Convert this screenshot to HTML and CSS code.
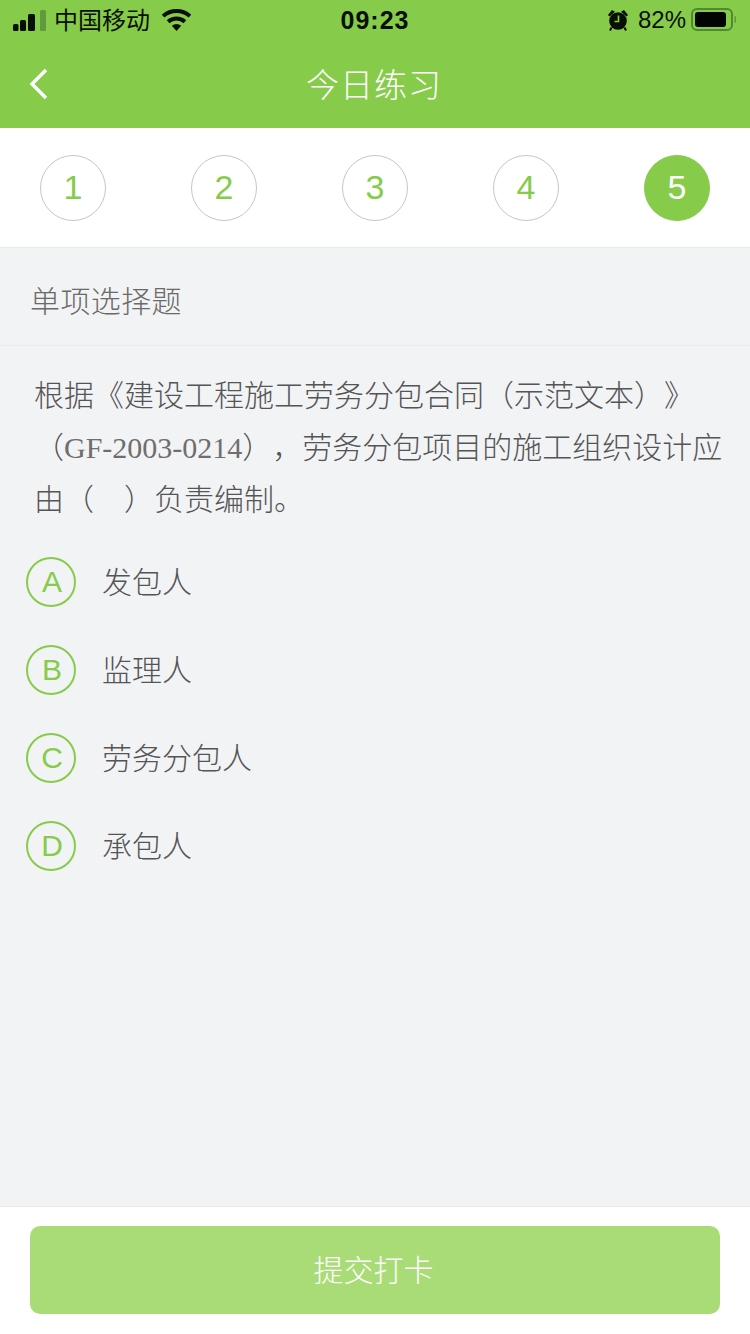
FILE: index.html
```html
<!DOCTYPE html>
<html lang="zh-CN">
<head>
  <meta charset="UTF-8" />
  <title>今日练习</title>
  <link rel="stylesheet" href="styles.css">
</head>
<body>
  <div class="page">
    <!-- Status bar + nav -->
    <div class="top">
      <div class="status">
        <div class="status-left">
          <svg class="signal" width="34" height="21" viewBox="0 0 34 21">
            <rect x="0" y="14" width="5.5" height="7" rx="1.5" fill="#0a0f05"/>
            <rect x="7" y="10" width="6" height="11" rx="1.5" fill="#0a0f05"/>
            <rect x="15" y="4" width="7" height="17" rx="1.5" fill="#0a0f05"/>
            <rect x="27" y="0" width="6" height="21" rx="1.5" fill="#5f9a3f"/>
          </svg>
          <span class="carrier">中国移动</span>
          <svg class="wifi" width="29" height="24" viewBox="0 0 29 24">
            <path d="M1.1 8.1A20 20 0 0 1 27.9 8.1" fill="none" stroke="#0a0f05" stroke-width="4"/>
            <path d="M6.1 13.7A12.5 12.5 0 0 1 22.9 13.7" fill="none" stroke="#0a0f05" stroke-width="4"/>
            <path d="M14.5 23L9.8 17.8A7 7 0 0 1 19.2 17.8Z" fill="#0a0f05"/>
          </svg>
        </div>
        <span class="time">09:23</span>
        <div class="status-right">
          <svg class="alarm" width="22" height="22" viewBox="0 0 22 22">
            <circle cx="11" cy="12" r="8.8" fill="#0a0f05"/>
            <path d="M1 6L5 1 8 2.8 2.5 7.5ZM21 6L17 1 14 2.8 19.5 7.5Z" fill="#0a0f05"/>
            <path d="M4.5 18.5L3 21.5M17.5 18.5L19 21.5" stroke="#0a0f05" stroke-width="2"/>
            <path d="M11.5 6.5V12.5H7.5" fill="none" stroke="#86cc4a" stroke-width="1.6"/>
          </svg>
          <span class="percent">82%</span>
          <svg class="battery" width="46" height="24" viewBox="0 0 46 24">
            <rect x="1" y="1" width="40" height="21" rx="5" fill="none" stroke="#4f8a32" stroke-width="2"/>
            <rect x="4" y="4" width="31" height="15" rx="3" fill="#020402"/>
            <rect x="43.5" y="8" width="1.5" height="7" rx="0.7" fill="#5f9a3f"/>
          </svg>
        </div>
      </div>
      <div class="nav">
        <svg class="back" width="20" height="32" viewBox="0 0 20 32">
          <path d="M17 2L3 16L17 30" fill="none" stroke="#fff" stroke-width="3.4"/>
        </svg>
        <h1>今日练习</h1>
      </div>
    </div>

    <!-- Question numbers -->
    <div class="steps">
      <div class="step">1</div>
      <div class="step">2</div>
      <div class="step">3</div>
      <div class="step">4</div>
      <div class="step current">5</div>
    </div>

    <div class="type">单项选择题</div>

    <div class="question">
      根据《建设工程施工劳务分包合同（示范文本）》<br>
      （<span class="latin">GF-2003-0214</span>），劳务分包项目的施工组织设计应<br>
      由（　）负责编制。
    </div>

    <div class="options">
      <div class="option"><span class="letter">A</span><span class="label">发包人</span></div>
      <div class="option"><span class="letter">B</span><span class="label">监理人</span></div>
      <div class="option"><span class="letter">C</span><span class="label">劳务分包人</span></div>
      <div class="option"><span class="letter">D</span><span class="label">承包人</span></div>
    </div>

    <div class="footer">
      <button class="submit">提交打卡</button>
    </div>
  </div>
</body>
</html>
```

FILE: styles.css
```css
* {
  box-sizing: border-box;
}

html, body {
  margin: 0;
  height: 100%;
}

body {
  font-family: "Noto Sans CJK SC", "Liberation Sans", sans-serif;
  background: #f2f3f5;
  color: #666;
  text-spacing-trim: space-all;
}

.page {
  display: flex;
  flex-direction: column;
  height: 1334px;
  overflow: hidden;
}

.top {
  background: #86cc4a;
  height: 128px;
}

.status {
  display: grid;
  grid-template-columns: 1fr auto 1fr;
  align-items: center;
  height: 40px;
  padding: 0 13px 0 13px;
  color: #0a0f05;
  font-family: "Liberation Sans", "Noto Sans CJK SC", sans-serif;
}

.status-left, .status-right {
  display: flex;
  align-items: center;
}

.status-right {
  justify-content: flex-end;
}

.carrier {
  font-family: "Noto Sans CJK SC", sans-serif;
  font-size: 24px;
  line-height: 1;
  margin-left: 7px;
  padding-bottom: 2px;
}

.wifi {
  margin-left: 12px;
}

.time {
  font-size: 25px;
  font-weight: bold;
  letter-spacing: 1px;
}

.alarm {
  margin-right: 9px;
}

.percent {
  font-size: 24px;
  margin-right: 5px;
}

.nav {
  position: relative;
  height: 88px;
  padding-right: 2px;
  display: flex;
  align-items: center;
  justify-content: center;
}

.nav h1 {
  margin: 0 0 2px;
  font-size: 33px;
  font-weight: 300;
  color: #fff;
  letter-spacing: 1px;
}

.back {
  position: absolute;
  left: 29px;
  top: 28px;
}

.steps {
  display: flex;
  justify-content: space-between;
  align-items: center;
  height: 120px;
  padding: 0 40px 0;
  background: #fff;
  border-bottom: 1px solid #e8e9eb;
}

.step {
  width: 66px;
  height: 66px;
  border: 1px solid #c6c6c6;
  border-radius: 50%;
  display: flex;
  align-items: center;
  justify-content: center;
  font-family: "Liberation Sans", sans-serif;
  font-size: 34px;
  color: #86cc4a;
}

.step.current {
  background: #86cc4a;
  border-color: #86cc4a;
  color: #fff;
}

.type {
  height: 98px;
  padding: 4px 30px 0;
  display: flex;
  align-items: center;
  font-size: 30px;
  font-weight: 300;
  line-height: 1;
  letter-spacing: 0.4px;
  color: #6a6a6a;
  border-bottom: 1px solid #e9eaec;
}

.question {
  padding: 21px 0 0 34px;
  font-size: 30px;
  line-height: 52px;
  font-weight: 300;
  color: #555;
  white-space: nowrap;
}

.latin {
  font-family: "Liberation Serif", serif;
  line-height: 1;
  color: #6e6e6e;
}

.options {
  padding: 15px 26px 0;
}

.option {
  height: 88px;
  display: flex;
  align-items: center;
  gap: 26px;
  font-size: 30px;
  font-weight: 300;
  color: #555;
}

.label {
  line-height: 1;
  padding-bottom: 4px;
}

.letter {
  width: 50px;
  height: 50px;
  padding-left: 2px;
  border: 2px solid #86cc4a;
  border-radius: 50%;
  display: flex;
  align-items: center;
  justify-content: center;
  font-family: "Liberation Sans", sans-serif;
  font-size: 30px;
  color: #86cc4a;
}

.footer {
  margin-top: auto;
  height: 128px;
  padding: 19px 30px 0;
  background: #fff;
  border-top: 1px solid #e8e9eb;
}

.submit {
  display: block;
  width: 100%;
  height: 88px;
  padding: 0 3px 4px 0;
  border: none;
  border-radius: 10px;
  background: #a9dc76;
  color: #fff;
  font-family: inherit;
  font-size: 30px;
  font-weight: 300;
}
```
